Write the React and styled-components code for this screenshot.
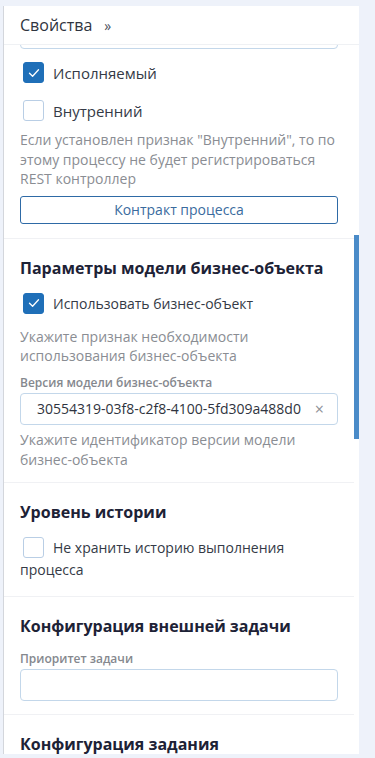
import React from "react";
import styled, { createGlobalStyle } from "styled-components";

const GlobalStyle = createGlobalStyle`
    html, body {
        margin: 0;
        padding: 0;
        background: #eef2fa;
        font-family: "Open Sans", "Noto Sans", sans-serif;
    }
`;

const Page = styled.div`
    padding: 6px 0 0 3px;
    height: 758px;
    box-sizing: border-box;
`;

const Panel = styled.div`
    width: 356px;
    height: 748px;
    box-sizing: border-box;
    background: #fff;
    border-left: 1px solid #d3d6dc;
    display: flex;
    flex-direction: column;
`;

const Header = styled.div`
    height: 38px;
    flex: none;
    display: flex;
    align-items: center;
    padding-left: 16px;
    border-bottom: 1px solid #eff1f4;
    font-size: 16px;
    color: #2f3440;
`;

const Chevron = styled.span`
    margin-left: 12px;
    font-size: 14px;
    color: #4a4f5a;
`;

const Body = styled.div`
    flex: 1;
    position: relative;
    overflow: hidden;
    padding-right: 5px;
`;

const Thumb = styled.div`
    position: absolute;
    right: 0;
    top: 190px;
    width: 5px;
    height: 204px;
    background: #4a8bc8;
`;

const Section = styled.div`
    padding: ${props => props.first ? "0 16px 14px" : "18px 16px 13px"};
    border-bottom: 1px solid #f0f1f4;
`;

const Title = styled.div`
    font-size: 16px;
    line-height: 22px;
    font-weight: 700;
    color: #1d2236;
    margin-bottom: 6px;
`;

const CheckRow = styled.label`
    display: block;
    padding: 8px 0 ${props => props.wrapped ? "2px" : "8px"};
    font-size: ${props => props.large ? "15px" : "14px"};
    line-height: 22px;
    color: #343a46;
`;

const Box = styled.span`
    display: inline-flex;
    align-items: center;
    justify-content: center;
    width: 21px;
    height: 21px;
    box-sizing: border-box;
    margin: 0 9px 0 3px;
    vertical-align: top;
    border-radius: 3px;
    background: ${props => props.checked ? "#1f6fb8" : "#fff"};
    border: 1px solid ${props => props.checked ? "#1f6fb8" : "#b9cee5"};
`;

const Help = styled.div`
    margin-top: ${props => props.gap || 0}px;
    font-size: 14px;
    line-height: 19.6px;
    color: #8a8d93;
`;

const FieldLabel = styled.div`
    margin: ${props => props.spaced ? "14px" : "9px"} 0 2px;
    font-size: 12px;
    line-height: 16px;
    font-weight: 600;
    color: #85888e;
`;

const Input = styled.div`
    height: 32px;
    box-sizing: border-box;
    border: 1px solid #c3d7ea;
    border-radius: 4px;
    display: flex;
    align-items: center;
    padding: 0 13px 0 16px;
    font-size: 14px;
    color: #2f3440;
    margin-top: ${props => props.offset || 0}px;
    margin-bottom: ${props => props.after || 0}px;
`;

const InputText = styled.span`
    flex: 1;
    white-space: nowrap;
    overflow: hidden;
`;

const Clear = styled.span`
    color: #8d9097;
    font-size: 16px;
    line-height: 1;
`;

const OutlineButton = styled.div`
    margin-top: 7px;
    height: 28px;
    box-sizing: border-box;
    border: 1px solid #2e6aa6;
    border-radius: 3px;
    display: flex;
    align-items: center;
    justify-content: center;
    font-size: 14px;
    color: #3a6b9e;
`;

function Checkbox({ checked }) {
    return <Box checked={checked}>
        {checked
            ? <svg width="12" height="10" viewBox="0 0 12 10">
                <path d="M1.5 5.2 L4.6 8.2 L10.5 1.8" fill="none" stroke="#fff" strokeWidth="1.3" strokeLinecap="round" strokeLinejoin="round" />
            </svg>
            : null}
    </Box>;
}

export default function App() {
    return <Page>
        <GlobalStyle />
        <Panel>
            <Header>Свойства<Chevron>»</Chevron></Header>
            <Body>
                <Section first>
                    <Input offset={-28} after={5} />
                    <CheckRow large><Checkbox checked />Исполняемый</CheckRow>
                    <CheckRow large><Checkbox />Внутренний</CheckRow>
                    <Help>Если установлен признак "Внутренний", то по этому процессу не будет регистрироваться REST контроллер</Help>
                    <OutlineButton>Контракт процесса</OutlineButton>
                </Section>
                <Section>
                    <Title>Параметры модели бизнес-объекта</Title>
                    <CheckRow><Checkbox checked />Использовать бизнес-объект</CheckRow>
                    <Help gap={4}>Укажите признак необходимости использования бизнес-объекта</Help>
                    <FieldLabel>Версия модели бизнес-объекта</FieldLabel>
                    <Input after={5}>
                        <InputText>30554319-03f8-c2f8-4100-5fd309a488d0</InputText>
                        <Clear>×</Clear>
                    </Input>
                    <Help>Укажите идентификатор версии модели бизнес-объекта</Help>
                </Section>
                <Section>
                    <Title>Уровень истории</Title>
                    <CheckRow wrapped><Checkbox />Не хранить историю выполнения процесса</CheckRow>
                </Section>
                <Section>
                    <Title>Конфигурация внешней задачи</Title>
                    <FieldLabel spaced>Приоритет задачи</FieldLabel>
                    <Input />
                </Section>
                <Section>
                    <Title>Конфигурация задания</Title>
                </Section>
                <Thumb />
            </Body>
        </Panel>
    </Page>;
}
